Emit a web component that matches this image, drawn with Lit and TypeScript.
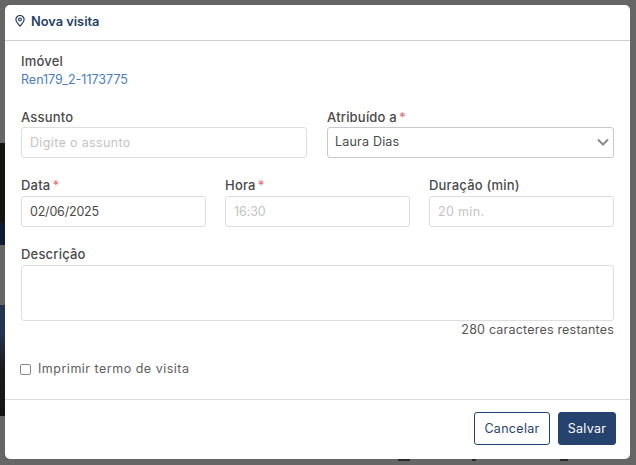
import { LitElement, html, css } from "lit";
import { customElement } from "lit/decorators.js";

@customElement("app-root")
export class AppRoot extends LitElement {
  static styles = css`
    :host {
      display: block;
      width: 636px;
      height: 465px;
      overflow: hidden;
      font-family: "Inter", "Open Sans", sans-serif;
      color: #555;
    }
    .backdrop {
      height: 465px;
      box-sizing: border-box;
      padding: 5px 6px 6px 5px;
      background: #666;
      position: relative;
    }
    .strip {
      position: absolute;
      left: 0;
      width: 5px;
    }
    .s1 { top: 143px; height: 80px; background: #151510; }
    .s2 { top: 223px; height: 22px; background: #0f1a33; }
    .s3 { top: 305px; height: 111px; background: linear-gradient(#25344f, #25344f 25%, #1c1c1e 55%, #141414); }
    .marks {
      position: absolute;
      left: 398px;
      top: 459px;
      display: flex;
      height: 2px;
    }
    .marks span { height: 2px; background: #2a2a2a; }
    .m1 { width: 12px; }
    .m2 { width: 4px; margin-left: 62px; }
    .m3 { width: 8px; margin-left: 84px; }
    .modal {
      position: relative;
      height: 454px;
      background: #fff;
      border-radius: 5px;
      display: flex;
      flex-direction: column;
    }
    .head {
      height: 36px;
      flex: none;
      box-sizing: border-box;
      border-bottom: 1px solid #cfcfcf;
      display: flex;
      align-items: center;
      gap: 6px;
      padding: 0 0 3px 10px;
      font-size: 12.8px;
      font-weight: 600;
      color: #243f66;
    }
    .body {
      flex: 1;
      padding: 12px 16px 0;
      display: flex;
      flex-direction: column;
    }
    .label {
      font-size: 13px;
      line-height: 16px;
      font-weight: 500;
      letter-spacing: 0.2px;
      color: #4a4a4a;
    }
    .req { color: #e9747c; margin-left: 2px; }
    .link { font-size: 12.5px; line-height: 16px; color: #4a7cc4; margin-top: 3px; }
    .row { display: grid; }
    .two { grid-template-columns: 286px 287px; column-gap: 20px; margin-top: 21px; }
    .three { grid-template-columns: repeat(3, 185px); column-gap: 19px; margin-top: 19px; }
    .field { display: flex; flex-direction: column; gap: 2px; }
    .three .field, .desc { gap: 3px; }
    .desc { margin-top: 19px; }
    .input {
      height: 31px;
      box-sizing: border-box;
      border: 1px solid #dedede;
      border-radius: 3px;
      display: flex;
      align-items: center;
      justify-content: space-between;
      padding: 0 8px;
      font-size: 12.5px;
      color: #4a4a4a;
    }
    .ph { color: #c4c4c4; letter-spacing: 0.35px; }
    .date { letter-spacing: -0.2px; }
    .time { letter-spacing: -0.1px; }
    .select { border-color: #c9c9c9; padding: 0 4px 2px 7px; letter-spacing: 0.2px; }
    .area {
      height: 56px;
      box-sizing: border-box;
      border: 1px solid #dedede;
      border-radius: 3px;
    }
    .count {
      text-align: right;
      font-size: 12.5px;
      line-height: 16px;
      letter-spacing: 0.2px;
      color: #555;
      margin-top: 1px;
    }
    .check {
      display: flex;
      align-items: center;
      gap: 7px;
      margin: 23px 0 0 -1px;
      font-size: 12.5px;
      line-height: 16px;
      letter-spacing: 0.5px;
      color: #5e5e5e;
    }
    .box {
      width: 9px;
      height: 9px;
      border: 1px solid #8a8a8a;
      border-radius: 2px;
    }
    .foot {
      height: 60px;
      flex: none;
      box-sizing: border-box;
      border-top: 1px solid #dcdcdc;
      display: flex;
      justify-content: flex-end;
      align-items: flex-start;
      gap: 8px;
      padding: 12px 14px 0 0;
    }
    .btn {
      height: 33px;
      box-sizing: border-box;
      border-radius: 3px;
      display: flex;
      align-items: center;
      justify-content: center;
      font-size: 12.5px;
      letter-spacing: 0.3px;
      border: 1px solid #26436f;
    }
    .cancel { width: 76px; background: #fff; color: #26436f; }
    .save { width: 58px; background: #26436f; color: #fff; }
    svg { display: block; flex: none; }
  `;

  render() {
    return html`
      <div class="backdrop">
        <div class="strip s1"></div>
        <div class="strip s2"></div>
        <div class="strip s3"></div>
        <div class="marks"><span class="m1"></span><span class="m2"></span><span class="m3"></span></div>
        <div class="modal">
          <div class="head">
            <svg width="10" height="12" viewBox="0 0 10 12" fill="none" stroke="#243f66" stroke-width="1.2">
              <path d="M5 11.2C3 9 .9 6.8.9 4.6a4.1 4.1 0 0 1 8.2 0C9.100 6.800 7 9 5 11.200z" />
              <circle cx="5" cy="4.600" r="1.400" />
            </svg>
            <span>Nova visita</span>
          </div>
          <div class="body">
            <div class="label">Imóvel</div>
            <div class="link">Ren179_2-1173775</div>
            <div class="row two">
              <div class="field">
                <div class="label">Assunto</div>
                <div class="input ph">Digite o assunto</div>
              </div>
              <div class="field">
                <div class="label">Atribuído a<span class="req">*</span></div>
                <div class="input select">
                  <span>Laura Dias</span>
                  <svg width="12" height="8" viewBox="0 0 12 8" fill="none" stroke="#8a8a8a" stroke-width="2">
                    <path d="M1 1.500l5 5 5-5" />
                  </svg>
                </div>
              </div>
            </div>
            <div class="row three">
              <div class="field">
                <div class="label">Data<span class="req">*</span></div>
                <div class="input date">02/06/2025</div>
              </div>
              <div class="field">
                <div class="label">Hora<span class="req">*</span></div>
                <div class="input ph time">16:30</div>
              </div>
              <div class="field">
                <div class="label">Duração (min)</div>
                <div class="input ph">20 min.</div>
              </div>
            </div>
            <div class="field desc">
              <div class="label">Descrição</div>
              <div class="area"></div>
            </div>
            <div class="count">280 caracteres restantes</div>
            <div class="check"><span class="box"></span><span>Imprimir termo de visita</span></div>
          </div>
          <div class="foot">
            <div class="btn cancel">Cancelar</div>
            <div class="btn save">Salvar</div>
          </div>
        </div>
      </div>
    `;
  }
}
